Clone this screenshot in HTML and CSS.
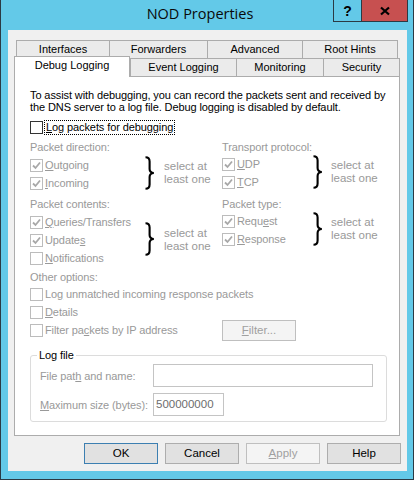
FILE: index.html
```html
<!DOCTYPE html>
<html>
<head>
<meta charset="utf-8">
<title>NOD Properties</title>
<link rel="stylesheet" href="styles.css">
</head>
<body>
<div class="window">
  <div class="titlebar">
    <div class="title">NOD Properties</div>
    <div class="capbtn help">?</div>
    <div class="capbtn close">
      <svg width="12" height="10" viewBox="0 0 12 10"><path d="M2 1.5 L10 8.5 M10 1.5 L2 8.5" stroke="#000" stroke-width="2.2" fill="none"/></svg>
    </div>
  </div>
  <div class="client">
    <div class="tabs">
      <div class="tabrow back">
        <div class="tab t-if">Interfaces</div>
        <div class="tab t-fw">Forwarders</div>
        <div class="tab t-adv">Advanced</div>
        <div class="tab t-rh">Root Hints</div>
      </div>
      <div class="tabrow front">
        <div class="tab sel t-dl">Debug Logging</div>
        <div class="tab t-el">Event Logging</div>
        <div class="tab t-mon">Monitoring</div>
        <div class="tab t-sec">Security</div>
      </div>
    </div>
    <div class="panel">
      <p class="intro">To assist with debugging, you can record the packets sent and received by<br>the DNS server to a log file. Debug logging is disabled by default.</p>
      <div class="cbrow main">
        <span class="cb on"></span>
        <span class="focus"><u>L</u>og packets for debugging</span>
      </div>

      <div class="options">
        <div class="group">
          <div class="glabel">Packet direction:</div>
          <div class="gbody">
            <div class="cbs">
              <div class="cbrow"><span class="cb checked"></span><span class="lbl"><u>O</u>utgoing</span></div>
              <div class="cbrow"><span class="cb checked"></span><span class="lbl"><u>I</u>ncoming</span></div>
            </div>
            <svg class="brace" width="12" height="34" viewBox="0 0 12 34"><path d="M1.5 1.2 C4.8 1.2 5.6 2.6 5.6 5.5 L5.6 13 C5.6 15.5 6.8 16.8 9.8 17 C6.8 17.2 5.6 18.5 5.6 21 L5.6 28.5 C5.6 31.4 4.8 32.8 1.5 32.8" stroke="#000" stroke-width="2.1" fill="none"/></svg>
            <div class="hint">select at<br>least one</div>
          </div>
        </div>
        <div class="group right">
          <div class="glabel">Transport protocol:</div>
          <div class="gbody">
            <div class="cbs">
              <div class="cbrow"><span class="cb checked"></span><span class="lbl"><u>U</u>DP</span></div>
              <div class="cbrow"><span class="cb checked"></span><span class="lbl"><u>T</u>CP</span></div>
            </div>
            <svg class="brace" width="12" height="34" viewBox="0 0 12 34"><path d="M1.5 1.2 C4.8 1.2 5.6 2.6 5.6 5.5 L5.6 13 C5.6 15.5 6.8 16.8 9.8 17 C6.8 17.2 5.6 18.5 5.6 21 L5.6 28.5 C5.6 31.4 4.8 32.8 1.5 32.8" stroke="#000" stroke-width="2.1" fill="none"/></svg>
            <div class="hint">select at<br>least one</div>
          </div>
        </div>

        <div class="group g2">
          <div class="glabel">Packet contents:</div>
          <div class="gbody">
            <div class="cbs">
              <div class="cbrow"><span class="cb checked"></span><span class="lbl"><u>Q</u>ueries/Transfers</span></div>
              <div class="cbrow"><span class="cb checked"></span><span class="lbl">Update<u>s</u></span></div>
              <div class="cbrow"><span class="cb"></span><span class="lbl"><u>N</u>otifications</span></div>
            </div>
            <svg class="brace up" width="12" height="34" viewBox="0 0 12 34"><path d="M1.5 1.2 C4.8 1.2 5.6 2.6 5.6 5.5 L5.6 13 C5.6 15.5 6.8 16.8 9.8 17 C6.8 17.2 5.6 18.5 5.6 21 L5.6 28.5 C5.6 31.4 4.8 32.8 1.5 32.8" stroke="#000" stroke-width="2.1" fill="none"/></svg>
            <div class="hint up">select at<br>least one</div>
          </div>
        </div>
        <div class="group g2 right">
          <div class="glabel">Packet type:</div>
          <div class="gbody">
            <div class="cbs">
              <div class="cbrow"><span class="cb checked"></span><span class="lbl">Requ<u>e</u>st</span></div>
              <div class="cbrow"><span class="cb checked"></span><span class="lbl"><u>R</u>esponse</span></div>
            </div>
            <svg class="brace" width="12" height="34" viewBox="0 0 12 34"><path d="M1.5 1.2 C4.8 1.2 5.6 2.6 5.6 5.5 L5.6 13 C5.6 15.5 6.8 16.8 9.8 17 C6.8 17.2 5.6 18.5 5.6 21 L5.6 28.5 C5.6 31.4 4.8 32.8 1.5 32.8" stroke="#000" stroke-width="2.1" fill="none"/></svg>
            <div class="hint">select at<br>least one</div>
          </div>
        </div>
      </div>

      <div class="other">
        <div class="glabel">Other options:</div>
        <div class="cbrow"><span class="cb"></span><span class="lbl">Lo<u>g</u> unmatched incoming response packets</span></div>
        <div class="cbrow"><span class="cb"></span><span class="lbl"><u>D</u>etails</span></div>
        <div class="filterrow">
          <div class="cbrow"><span class="cb"></span><span class="lbl">Filter pa<u>c</u>kets by IP address</span></div>
          <div class="btn small disabled"><u>F</u>ilter...</div>
        </div>
      </div>

      <fieldset class="logfile">
        <legend>Log file</legend>
        <div class="fields">
          <span class="flabel">File pat<u>h</u> and name:</span>
          <span class="input wide"></span>
          <span class="flabel"><u>M</u>aximum size (bytes):</span>
          <span class="input narrow">500000000</span>
        </div>
      </fieldset>
    </div>
    <div class="buttons">
      <div class="btn default">OK</div>
      <div class="btn">Cancel</div>
      <div class="btn disabled"><u>A</u>pply</div>
      <div class="btn">Help</div>
    </div>
  </div>
</div>
</body>
</html>
```

FILE: styles.css
```css
* { box-sizing: border-box; }
html, body { margin: 0; padding: 0; }
body {
  width: 414px;
  height: 480px;
  overflow: hidden;
  font-family: "Liberation Sans", Arial, sans-serif;
  font-size: 11px;
  letter-spacing: -0.1px;
  color: #000;
  background: #63c9e8;
}
u { text-decoration: underline; text-underline-offset: 1px; }

.window {
  width: 414px;
  height: 480px;
  background: #63c9e8;
  border-left: 1px solid #2b3a44;
  border-right: 1px solid #2b3a44;
  border-bottom: 1px solid #2b3a44;
}

.titlebar {
  height: 30px;
  display: flex;
  align-items: flex-start;
}
.title {
  flex: 1;
  padding-left: 66px;
  padding-top: 4px;
  text-align: center;
  font-family: "Open Sans", "Noto Sans", sans-serif;
  font-size: 14.5px;
  letter-spacing: 0;
  line-height: 20px;
  color: #0a0a0a;
}
.capbtn {
  height: 22px;
  border-left: 1px solid #2b3a44;
  border-bottom: 1px solid #2b3a44;
  display: flex;
  align-items: center;
  justify-content: center;
}
.help {
  width: 28px;
  font-family: "Liberation Sans", sans-serif;
  font-weight: bold;
  font-size: 14px;
}
.close {
  width: 47px;
  margin-right: 5px;
  border-right: 1px solid #2b3a44;
  background: #c75050;
}

.client {
  margin: 0 6px 0 7px;
  height: 441px;
  background: #f0f0f0;
}

.tabs { padding-top: 10px; }
.tabrow { display: flex; align-items: flex-end; }
.tabrow.back { padding-left: 8px; height: 18px; }
.tabrow.front { padding-left: 6px; height: 18px; }
.tab {
  height: 18px;
  border: 1px solid #acacac;
  border-bottom: none;
  background: #ebebeb;
  text-align: center;
  line-height: 17px;
  white-space: nowrap;
  letter-spacing: 0;
}
.tab + .tab { margin-left: -1px; }
.tab.sel {
  position: relative;
  z-index: 2;
  height: 21px;
  margin-top: -2px;
  margin-bottom: -1px;
  background: #fff;
  line-height: 17px;
}
.t-if { width: 94px; }
.t-fw { width: 99px; }
.t-adv { width: 96px; }
.t-rh { width: 96px; }
.t-dl { width: 116px; }
.t-el { width: 107px; margin-left: 0 !important; }
.t-mon { width: 88px; }
.t-sec { width: 77px; }

.panel {
  position: relative;
  z-index: 1;
  margin-left: 6px;
  width: 386px;
  height: 360px;
  background: #fff;
  border: 1px solid #acacac;
  padding: 0 0 0 15px;
}
.intro {
  margin: 12px 0 0 0;
  line-height: 12px;
  white-space: nowrap;
}

.cbrow {
  display: flex;
  align-items: center;
  height: 13px;
  line-height: 13px;
  color: #999;
  white-space: nowrap;
}
.cb {
  width: 13px;
  height: 13px;
  flex: none;
  border: 1px solid #bcbcbc;
  background: #fff;
  margin-right: 2px;
}
.cb.on { border-color: #333; }
.cb.checked {
  background: #fff url("data:image/svg+xml;utf8,<svg xmlns='http://www.w3.org/2000/svg' width='11' height='11'><path d='M2 5.5 L4.5 8 L9 2.5' stroke='%23a8a8a8' stroke-width='1.8' fill='none'/></svg>") no-repeat center;
}
.cbrow.main { margin-top: 8px; color: #000; }
.focus {
  outline: 1px dotted #000;
  outline-offset: 0;
  padding: 0 1px;
  line-height: 12px;
  height: 13px;
}

.options {
  display: grid;
  grid-template-columns: 192px 1fr;
}
.glabel {
  color: #999;
  line-height: 13px;
  height: 13px;
  white-space: nowrap;
}
.group { margin-top: 7px; }
.group.g2 { margin-top: 8px; }
.gbody {
  display: flex;
  align-items: flex-start;
  margin-top: 5px;
}
.group.right .gbody { margin-top: 4px; }
.cbs {
  display: flex;
  flex-direction: column;
  gap: 5px;
  width: 114px;
}
.group.right .cbs { width: 90px; }
.brace { flex: none; margin-top: -3px; }
.brace.up { margin-top: 6px; }
.hint {
  margin-left: 8px;
  margin-top: 1px;
  color: #999;
  line-height: 13px;
  font-size: 11.5px;
  letter-spacing: 0;
}
.hint.up { margin-top: 11px; }
.group.right .hint { margin-left: 7px; }

.other { margin-top: 6px; }
.other > .cbrow { margin-top: 4px; }
.other > .cbrow + .cbrow { margin-top: 5px; }
.filterrow {
  display: grid;
  grid-template-columns: 192px 1fr;
  align-items: center;
  height: 21px;
  margin-top: 1px;
}

.btn {
  width: 74px;
  height: 21px;
  border: 1px solid #adadad;
  background: #e1e1e1;
  text-align: center;
  line-height: 19px;
  font-size: 11.5px;
  letter-spacing: 0;
  color: #000;
}
.btn.default { border-color: #3c7fb1; }
.btn.disabled {
  background: #f4f4f4;
  border-color: #bfbfbf;
  color: #a0a0a0;
}
.btn.small { width: 74px; }

.logfile {
  margin: 8px 0 0 0;
  width: 357px;
  border: 1px solid #dcdcdc;
  border-radius: 3px;
  padding: 2px 13px 5px 9px;
}
.logfile legend {
  padding: 0 2px;
  margin-left: -3px;
  line-height: 13px;
  color: #000;
}
.fields {
  display: grid;
  grid-template-columns: 113px 1fr;
  row-gap: 6px;
  align-items: center;
}
.flabel { color: #999; white-space: nowrap; }
.input {
  height: 23px;
  border: 1px solid #c4c4c4;
  background: #fff;
  line-height: 20px;
  padding-left: 2px;
  color: #6d6d6d;
  font-size: 11.5px;
  letter-spacing: 0;
}
.input.wide { width: 220px; }
.input.narrow { width: 71px; }

.buttons {
  display: flex;
  justify-content: flex-end;
  gap: 7px;
  margin-top: 7px;
  padding-right: 6px;
}
```
